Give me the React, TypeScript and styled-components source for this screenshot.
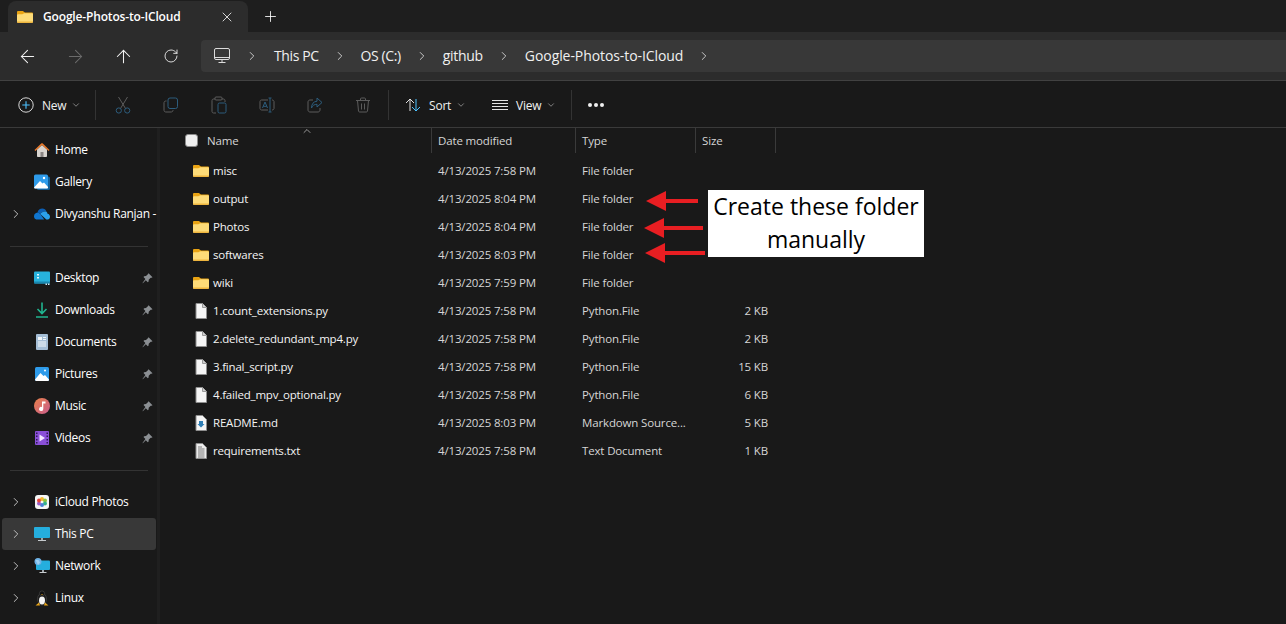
import React from "react";
import styled, { createGlobalStyle } from "styled-components";
import {
  ArrowLeft,
  ArrowRight,
  ArrowUp,
  ChevronDown,
  ChevronRight,
  ChevronUp,
  Plus,
  RotateCw,
  X,
} from "lucide-react";

const Global = createGlobalStyle`
  html, body { margin: 0; padding: 0; background: #191919; }
  body { font-family: "Open Sans", "Noto Sans", sans-serif; color: #fff; overflow: hidden; }
`;

const Page = styled.div`
  position: relative;
  width: 1286px;
  height: 624px;
  overflow: hidden;
  display: flex;
  flex-direction: column;
  background: #191919;
`;

const TabStrip = styled.div`
  height: 32px;
  flex: none;
  display: flex;
  align-items: flex-end;
  padding-left: 8px;
  background: #1e1e1e;
`;

const Tab = styled.div`
  width: 240px;
  height: 31px;
  box-sizing: border-box;
  display: flex;
  align-items: center;
  padding: 0 13px 0 9px;
  background: #2c2c2c;
  border-radius: 8px 8px 0 0;
  font-size: 12px;
  font-weight: 600;
`;

const TabTitle = styled.span`
  flex: 1;
  margin-left: 10px;
  letter-spacing: -0.16px;
`;

const NewTab = styled.div`
  display: flex;
  margin: 0 0 7px 14px;
  color: #fff;
  height: 17px;
`;

const NavBar = styled.div`
  height: 48px;
  flex: none;
  box-sizing: border-box;
  display: flex;
  align-items: center;
  padding-left: 3px;
  background: #2c2c2c;
`;

const NavButton = styled.div<{ $dim?: boolean }>`
  width: 48px;
  display: flex;
  justify-content: center;
  color: ${(p) => (p.$dim ? "#6b6b6b" : "#f2f2f2")};
`;

const Crumbs = styled.div`
  flex: 1;
  height: 32px;
  margin-left: 6px;
  display: flex;
  align-items: center;
  padding-left: 13px;
  background: #383838;
  border-radius: 4px 0 0 4px;
  font-size: 14px;
  color: #f0f0f0;
`;

const Crumb = styled.span<{ $spacing: number }>`
  letter-spacing: ${(p) => p.$spacing}px;
  margin-bottom: 2px;
`;

const CrumbArrow = styled.span`
  display: flex;
  width: 42px;
  justify-content: center;
  color: #e6e6e6;
`;

const FirstArrow = styled(CrumbArrow)`
  width: 44px;
`;

const CommandBar = styled.div`
  height: 48px;
  flex: none;
  box-sizing: border-box;
  display: flex;
  align-items: center;
  border-top: 1px solid #414141;
  border-bottom: 1px solid #3a3a3a;
  background: #191919;
  font-size: 12px;
  color: #f0f0f0;
  padding: 2px 0 0 18px;
`;

const CommandDivider = styled.div<{ $left: number; $right: number }>`
  width: 1px;
  height: 30px;
  background: #333;
  margin: 0 ${(p) => p.$right}px 0 ${(p) => p.$left}px;
`;

const IconSlot = styled.div`
  width: 48px;
  height: 20px;
  display: flex;
  justify-content: center;
  align-items: center;
`;

const LabelIcon = styled.span<{ $left: number }>`
  display: flex;
  margin-left: ${(p) => p.$left}px;
`;

const CommandLabel = styled.div<{ $width: number }>`
  display: flex;
  align-items: center;
  width: ${(p) => p.$width}px;
  margin-left: 8px;
  letter-spacing: -0.2px;
`;

const Caret = styled.span`
  display: flex;
  margin-left: 5px;
  color: #c8c8c8;
`;

const Dots = styled.div`
  display: flex;
  gap: 2px;
  margin-left: 10px;
`;

const Dot = styled.span`
  width: 4px;
  height: 4px;
  border-radius: 50%;
  background: #f0f0f0;
`;

const Body = styled.div`
  flex: 1;
  display: flex;
  min-height: 0;
`;

const Sidebar = styled.nav`
  width: 157px;
  flex: none;
  box-sizing: border-box;
  padding: 6px 0 0 2px;
  font-size: 12px;
`;

const SideRow = styled.div<{ $active?: boolean }>`
  height: 32px;
  width: 154px;
  box-sizing: border-box;
  display: flex;
  align-items: center;
  position: relative;
  padding-left: 32px;
  border-radius: 3px;
  background: ${(p) => (p.$active ? "#383838" : "transparent")};
  white-space: nowrap;
`;

const SideChevron = styled.span`
  position: absolute;
  left: 7px;
  top: 9px;
  display: flex;
  color: #c8c8c8;
`;

const SideIcon = styled.span`
  width: 16px;
  height: 16px;
  display: flex;
  flex: none;
`;

const SideText = styled.span`
  margin: 0 0 2px 5px;
  letter-spacing: -0.32px;
  flex: 1;
`;

const PinSlot = styled.span`
  display: flex;
  margin-right: 3px;
`;

const SideRule = styled.div<{ $before: number; $after: number }>`
  height: 1px;
  width: 138px;
  background: #333;
  margin: ${(p) => p.$before}px 0 ${(p) => p.$after}px 8px;
`;

const Gutter = styled.div`
  width: 3px;
  flex: none;
  background: #1f1f1f;
`;

const Main = styled.main`
  flex: 1;
  position: relative;
  font-size: 11.5px;
`;

const Columns = "272px 144px 120px 80px";

const HeaderRow = styled.div`
  height: 25px;
  display: grid;
  grid-template-columns: ${Columns};
  color: #d6d6d6;
  margin-bottom: 4px;
`;

const HeaderCell = styled.div<{ $pad: number }>`
  display: flex;
  align-items: center;
  padding-left: ${(p) => p.$pad}px;
  border-right: 1px solid #3a3a3a;
  letter-spacing: -0.15px;
`;

const Check = styled.span`
  width: 11px;
  height: 11px;
  margin-right: 9px;
  border-radius: 3px;
  background: #efefef;
  border: 1px solid #8a8a8a;
`;

const SortCaret = styled.span`
  position: absolute;
  left: 141px;
  top: -3px;
  display: flex;
  color: #cfcfcf;
`;

const FileRow = styled.div`
  height: 28px;
  display: grid;
  grid-template-columns: ${Columns};
  align-items: center;
  color: #d6d6d6;
  letter-spacing: -0.15px;
`;

const NameCell = styled.div`
  display: flex;
  align-items: center;
  padding-left: 33px;
  color: #f4f4f4;
`;

const FileName = styled.span`
  margin: 0 0 1px 4px;
  letter-spacing: -0.2px;
`;

const MetaCell = styled.div`
  padding-left: 6px;
  margin-bottom: 1px;
`;

const SizeCell = styled.div`
  text-align: right;
  padding-right: 8px;
  margin-bottom: 1px;
`;

const Callout = styled.div`
  position: absolute;
  left: 708px;
  top: 190px;
  width: 216px;
  height: 67px;
  background: #fff;
  color: #000;
  font-size: 23px;
  line-height: 33px;
  text-align: center;
`;

const ArrowMark = styled.svg<{ $x: number; $y: number }>`
  position: absolute;
  left: ${(p) => p.$x}px;
  top: ${(p) => p.$y}px;
`;

const FolderIcon = () => (
  <svg width="16" height="16" viewBox="0 0 16 16">
    <path d="M0 3.2C0 2.5.5 2 1.2 2h4.3c.4 0 .7.1 1 .4L8 3.6h6.8c.7 0 1.2.5 1.2 1.2V7H0z" fill="#e9a313" />
    <path d="M0 6.2c0-.5.4-.9.9-.9h4.4L7.2 4.2h7.9c.5 0 .9.4.9.9v7.7c0 .7-.5 1.2-1.2 1.2H1.2C.5 14 0 13.5 0 12.8z" fill="#fddb78" />
    <path d="M0 12.4h16v.4c0 .7-.5 1.2-1.2 1.2H1.2C.5 14 0 13.5 0 12.8z" fill="#eeb53e" />
  </svg>
);

const PageIcon = () => (
  <svg width="16" height="16" viewBox="0 0 16 16">
    <path d="M3 .5h6.5l4 4v11H3z" fill="#f5f5f5" stroke="#8e8e8e" />
    <path d="M9.5.5v4h4" fill="#cfcfcf" stroke="#9a9a9a" />
  </svg>
);

const MarkdownIcon = () => (
  <svg width="16" height="16" viewBox="0 0 16 16">
    <path d="M3 .5h6.5l4 4v11H3z" fill="#f5f5f5" stroke="#8e8e8e" />
    <path d="M6 6h4v3h1.500L8 12.500 4.500 9H6z" fill="#2f7fb6" />
  </svg>
);

const TextIcon = () => (
  <svg width="16" height="16" viewBox="0 0 16 16">
    <path d="M3 .5h6.5l4 4v11H3z" fill="#ececec" stroke="#8e8e8e" />
    <path d="M5 4h4M5 6h6.5M5 8h6.5M5 10h6.5M5 12h6.5M5 14h6.5" stroke="#7c7c7c" />
  </svg>
);

const MonitorGlyph = () => (
  <svg width="16" height="16" viewBox="0 0 16 16" fill="none" stroke="#dcdcdc" strokeWidth="1">
    <rect x="0.5" y="0.5" width="15" height="11" rx="1.5" />
    <path d="M.5 9.500h15M8 11.500v3M4.500 14.500h7" />
  </svg>
);

const NewIcon = () => (
  <svg width="16" height="16" viewBox="0 0 16 16" fill="none">
    <circle cx="8" cy="8" r="7.2" stroke="#d8d8d8" />
    <path d="M8 4.300v7.400M4.300 8h7.400" stroke="#4cc2ff" strokeWidth="1.1" />
  </svg>
);

const CutIcon = () => (
  <svg width="16" height="18" viewBox="0 0 16 18" fill="none">
    <path d="M3.500 1l7 11.500M12.500 1l-7 11.500" stroke="#5c5c5c" />
    <circle cx="3.800" cy="14.500" r="2.600" stroke="#2d5d7d" />
    <circle cx="12.200" cy="14.500" r="2.600" stroke="#2d5d7d" />
  </svg>
);

const CopyIcon = () => (
  <svg width="16" height="16" viewBox="0 0 16 16" fill="none">
    <path d="M3.500 4h-.7C1.800 4 1 4.800 1 5.800v7.400C1 14.200 1.800 15 2.800 15h5.400c1 0 1.800-.8 1.800-1.800V13" stroke="#5c5c5c" />
    <rect x="5" y="1" width="9.500" height="10.500" rx="2" stroke="#2d5d7d" />
  </svg>
);

const PasteIcon = () => (
  <svg width="16" height="18" viewBox="0 0 16 18" fill="none">
    <path d="M4 3H2.500C1.700 3 1 3.700 1 4.500v11C1 16.300 1.700 17 2.500 17H5M11 3h1.500c.8 0 1.500.7 1.500 1.500V6" stroke="#5c5c5c" />
    <rect x="4" y="1" width="7" height="3" rx="1" stroke="#5c5c5c" />
    <rect x="7" y="7" width="8" height="10" rx="1.500" stroke="#2d5d7d" />
  </svg>
);

const RenameIcon = () => (
  <svg width="16" height="16" viewBox="0 0 16 16" fill="none">
    <path d="M9 3H2.500C1.700 3 1 3.700 1 4.500v7C1 12.300 1.700 13 2.500 13H9M13 3c1.100 0 2 .7 2 1.500v7c0 .8-.9 1.500-2 1.500" stroke="#5c5c5c" />
    <path d="M11 1v14M9.500 1h3M9.500 15h3M3.500 11L6 5l2.500 6M4.300 9.300h3.400" stroke="#2d5d7d" />
  </svg>
);

const ShareIcon = () => (
  <svg width="16" height="16" viewBox="0 0 16 16" fill="none">
    <path d="M6 3H3C1.900 3 1 3.900 1 5v8c0 1.100.9 2 2 2h8c1.100 0 2-.9 2-2v-2" stroke="#5c5c5c" />
    <path d="M10 1l5 4.500L10 10V7.300C7.500 7.300 5.500 8.300 4.500 11c0-4 2-6.500 5.500-6.800z" stroke="#2d5d7d" strokeLinejoin="round" />
  </svg>
);

const TrashIcon = () => (
  <svg width="16" height="16" viewBox="0 0 16 16" fill="none" stroke="#5c5c5c">
    <path d="M1 3.500h14M5.500 3.500V2c0-.6.4-1 1-1h3c.6 0 1 .4 1 1v1.500M2.500 3.500l1 10.500c.1.600.5 1 1.100 1h6.800c.6 0 1-.4 1.100-1l1-10.500M6.500 6.500v6M9.500 6.500v6" />
  </svg>
);

const SortIcon = () => (
  <svg width="16" height="16" viewBox="0 0 16 16" fill="none">
    <path d="M5 14V2M1 6l4-4 4 4" stroke="#e4e4e4" />
    <path d="M11 2v12M7 10l4 4 4-4" stroke="#4cc2ff" />
  </svg>
);

const ViewIcon = () => (
  <svg width="16" height="12" viewBox="0 0 16 12" stroke="#e4e4e4">
    <path d="M0 1.500h16M0 4.500h16M0 7.500h16M0 10.500h16" />
  </svg>
);

const PinIcon = () => (
  <svg width="11" height="11" viewBox="0 0 11 11">
    <path d="M6.800.5l3.700 3.700-1 .6-.8-.1-2 2.100-.1 1.800-.8.7-2-2L.8 10.200l-.3-.3L3.400 6 1.500 4l.7-.8L4 3.100l2.100-2-.1-.7z" fill="#8b8f93" />
  </svg>
);

const HomeIcon = () => (
  <svg width="16" height="16" viewBox="0 0 16 16">
    <path d="M3 7.500L8 3l5 4.500V14c0 .5-.4 1-1 1H4c-.6 0-1-.5-1-1z" fill="#d8d4cf" />
    <path d="M6.500 10h3v5h-3z" fill="#8a8583" />
    <path d="M.5 8L7.200 1.500c.5-.4 1.100-.4 1.600 0L15.500 8l-.9.900L8 3 1.400 8.900z" fill="#e8792b" />
  </svg>
);

const GalleryIcon = () => (
  <svg width="16" height="16" viewBox="0 0 16 16">
    <rect x="3" y="2.500" width="13" height="13.500" rx="1.500" fill="#135f99" />
    <rect x="0" y="0.500" width="14" height="14" rx="1.500" fill="#2e9bea" />
    <path d="M0 13.500L6 7l2.500 2.500 1.500-1 4 4.500v.5c0 .6-.5 1-1 1H1.500c-.8 0-1.500-.5-1.500-1.500z" fill="#fff" />
    <circle cx="10" cy="4" r="1.200" fill="#fff" />
  </svg>
);

const CloudIcon = () => (
  <svg width="16" height="16" viewBox="0 0 16 16">
    <path d="M3.500 6.500C4 4 6 2.500 8.300 2.500c2 0 3.500 1 4.200 3.200C10 5 7.500 6 6.300 8 5.500 7.300 4.500 6.700 3.500 6.500z" fill="#0c5fb5" />
    <path d="M3.500 6.500C1.500 6.700 0 8.300 0 10.200 0 12 1 13 2.200 13.500h8L6.300 8C5.500 7.200 4.500 6.700 3.500 6.500z" fill="#1076d0" />
    <path d="M12.500 5.700C10 5 7.500 6 6.300 8l6 5.500h1.500c1.200-.2 2.200-1.300 2.200-2.800 0-1.500-1-2.800-2.500-3-.1-.7-.3-1.400-1-2z" fill="#2ba0ec" />
  </svg>
);

const DesktopIcon = () => (
  <svg width="16" height="16" viewBox="0 0 16 16">
    <rect x="0" y="1.500" width="16" height="12" rx="1" fill="#27b2dc" />
    <path d="M0 11.500h16v1c0 .6-.4 1-1 1H1c-.6 0-1-.4-1-1z" fill="#1a86ad" />
    <path d="M3 4h2v1.500H3zM3 7h2v1.500H3z" fill="#e5f8ff" />
    <path d="M11.500 13.500H13V15h-1.500zM14 13.500h1.500V15H14z" fill="#cfeaf5" />
  </svg>
);

const DownloadIcon = () => (
  <svg width="16" height="16" viewBox="0 0 16 16" fill="none" stroke="#20b48f" strokeWidth="1.600">
    <path d="M8 .5V11M3.500 7L8 11.500 12.500 7M2 15h12" />
  </svg>
);

const DocumentsIcon = () => (
  <svg width="16" height="16" viewBox="0 0 16 16">
    <rect x="2" y="0" width="12" height="16" rx="1" fill="#a5bed6" />
    <rect x="4" y="3" width="4" height="3" fill="#f4f8fb" />
    <path d="M9 3.500h3M9 5.500h3M4 8h8M4 10h8M4 12h8" stroke="#f4f8fb" />
  </svg>
);

const PicturesIcon = () => (
  <svg width="16" height="16" viewBox="0 0 16 16">
    <rect x="1" y="1" width="14" height="14" rx="1.500" fill="#2e9bea" />
    <path d="M1 13.500L6.500 7l3 3 1.500-1 4 4.500v.2c0 .7-.6 1.300-1.300 1.300H2.500C1.700 15 1 14.300 1 13.500z" fill="#fff" />
    <circle cx="11" cy="4.500" r="1" fill="#fff" />
  </svg>
);

const MusicIcon = () => (
  <svg width="16" height="16" viewBox="0 0 16 16">
    <defs>
      <linearGradient id="musicFill" x1="0" y1="0" x2="1" y2="1">
        <stop offset="0" stopColor="#ea8149" />
        <stop offset="1" stopColor="#c85c8e" />
      </linearGradient>
    </defs>
    <circle cx="8" cy="8" r="8" fill="url(#musicFill)" />
    <path d="M8 3.500h3.500v2H9.300v5.300A2.100 2.100 0 1 1 8 9z" fill="#fff" />
  </svg>
);

const VideosIcon = () => (
  <svg width="16" height="16" viewBox="0 0 16 16">
    <rect x="1" y="1" width="14" height="14" rx="1" fill="#8a4fd8" />
    <path d="M2 2.500h1.500V4H2zM2 5.500h1.500V7H2zM2 9h1.500v1.500H2zM2 12h1.500v1.500H2zM12.500 2.500H14V4h-1.500zM12.500 5.500H14V7h-1.500zM12.500 9H14v1.500h-1.500zM12.500 12H14v1.500h-1.500z" fill="#2d1a52" />
    <path d="M5.500 4.500L11 8l-5.500 3.500z" fill="#f2e6ff" />
  </svg>
);

const ICloudIcon = () => (
  <svg width="16" height="16" viewBox="0 0 16 16">
    <rect x="1" y="1" width="14" height="14" rx="3" fill="#f6f6f6" />
    <circle cx="8" cy="5" r="2" fill="#f2b630" />
    <circle cx="11" cy="6.500" r="2" fill="#8fc43c" />
    <circle cx="11" cy="9.500" r="2" fill="#37b28a" />
    <circle cx="8" cy="11" r="2" fill="#4a82d6" />
    <circle cx="5" cy="9.500" r="2" fill="#9a5fc8" />
    <circle cx="5" cy="6.500" r="2" fill="#e8463c" />
  </svg>
);

const ThisPCIcon = () => (
  <svg width="16" height="16" viewBox="0 0 16 16">
    <rect x="0" y="1" width="16" height="11" rx="1" fill="#25aede" />
    <path d="M7 12h2v2H7z" fill="#9fa6ab" />
    <path d="M4 14h8v1H4z" fill="#c5cacd" />
  </svg>
);

const NetworkIcon = () => (
  <svg width="16" height="16" viewBox="0 0 16 16">
    <rect x="2" y="2.500" width="14" height="9.500" rx="1" fill="#25aede" />
    <path d="M8 12h2v2H8z" fill="#9fa6ab" />
    <path d="M5.500 14h7v1h-7z" fill="#c5cacd" />
    <circle cx="4" cy="3.500" r="3.500" fill="#6fb3e8" />
    <path d="M1.500 2h3L6 4.500 4 7z" fill="#9dd0f2" />
  </svg>
);

const LinuxIcon = () => (
  <svg width="16" height="16" viewBox="0 0 16 16">
    <ellipse cx="8" cy="9" rx="4.500" ry="6" fill="#1a1a1a" stroke="#555" strokeWidth="0.500" />
    <ellipse cx="8" cy="10.500" rx="3" ry="4" fill="#f4f4f4" />
    <circle cx="8" cy="3.500" r="2.600" fill="#111" stroke="#555" strokeWidth="0.500" />
    <path d="M7 4h2L8 5z" fill="#e8a418" />
    <path d="M1.500 15.500L5 12.500l1 3zM14.500 15.500L11 12.500l-1 3z" fill="#e8a418" />
  </svg>
);

const quickAccess: [string, React.ReactElement][] = [
  ["Desktop", <DesktopIcon />],
  ["Downloads", <DownloadIcon />],
  ["Documents", <DocumentsIcon />],
  ["Pictures", <PicturesIcon />],
  ["Music", <MusicIcon />],
  ["Videos", <VideosIcon />],
];

const places: [string, React.ReactElement][] = [
  ["iCloud Photos", <ICloudIcon />],
  ["This PC", <ThisPCIcon />],
  ["Network", <NetworkIcon />],
  ["Linux", <LinuxIcon />],
];

const files = [
  { name: "misc", date: "4/13/2025 7:58 PM", type: "File folder", size: "", icon: <FolderIcon /> },
  { name: "output", date: "4/13/2025 8:04 PM", type: "File folder", size: "", icon: <FolderIcon /> },
  { name: "Photos", date: "4/13/2025 8:04 PM", type: "File folder", size: "", icon: <FolderIcon /> },
  { name: "softwares", date: "4/13/2025 8:03 PM", type: "File folder", size: "", icon: <FolderIcon /> },
  { name: "wiki", date: "4/13/2025 7:59 PM", type: "File folder", size: "", icon: <FolderIcon /> },
  { name: "1.count_extensions.py", date: "4/13/2025 7:58 PM", type: "Python.File", size: "2 KB", icon: <PageIcon /> },
  { name: "2.delete_redundant_mp4.py", date: "4/13/2025 7:58 PM", type: "Python.File", size: "2 KB", icon: <PageIcon /> },
  { name: "3.final_script.py", date: "4/13/2025 7:58 PM", type: "Python.File", size: "15 KB", icon: <PageIcon /> },
  { name: "4.failed_mpv_optional.py", date: "4/13/2025 7:58 PM", type: "Python.File", size: "6 KB", icon: <PageIcon /> },
  { name: "README.md", date: "4/13/2025 8:03 PM", type: "Markdown Source...", size: "5 KB", icon: <MarkdownIcon /> },
  { name: "requirements.txt", date: "4/13/2025 7:58 PM", type: "Text Document", size: "1 KB", icon: <TextIcon /> },
];

const arrows = [
  { x: 646, y: 191, tail: 32 },
  { x: 644, y: 218, tail: 39 },
  { x: 645, y: 243, tail: 40 },
];

const crumbs: [string, number][] = [
  ["This PC", -0.4],
  ["OS (C:)", -0.4],
  ["github", -0.3],
  ["Google-Photos-to-ICloud", -0.08],
];

function SideEntry(props: {
  label: string;
  icon: React.ReactElement;
  expandable?: boolean;
  pinned?: boolean;
  active?: boolean;
}): React.ReactElement {
  return (
    <SideRow $active={props.active}>
      {props.expandable && (
        <SideChevron>
          <ChevronRight size={14} strokeWidth={1.6} />
        </SideChevron>
      )}
      <SideIcon>{props.icon}</SideIcon>
      <SideText>{props.label}</SideText>
      {props.pinned && (
        <PinSlot>
          <PinIcon />
        </PinSlot>
      )}
    </SideRow>
  );
}

function MenuLabel(props: { text: string; width: number }): React.ReactElement {
  return (
    <CommandLabel $width={props.width}>
      {props.text}
      <Caret>
        <ChevronDown size={10} strokeWidth={1.4} />
      </Caret>
    </CommandLabel>
  );
}

function App(): React.ReactElement {
  return (
    <Page>
      <Global />
      <TabStrip>
        <Tab>
          <FolderIcon />
          <TabTitle>Google-Photos-to-ICloud</TabTitle>
          <X size={16} strokeWidth={1.2} />
        </Tab>
        <NewTab>
          <Plus size={17} strokeWidth={1.2} />
        </NewTab>
      </TabStrip>
      <NavBar>
        <NavButton>
          <ArrowLeft size={21} strokeWidth={1.2} />
        </NavButton>
        <NavButton $dim>
          <ArrowRight size={21} strokeWidth={1.2} />
        </NavButton>
        <NavButton>
          <ArrowUp size={21} strokeWidth={1.2} />
        </NavButton>
        <NavButton>
          <RotateCw size={16} strokeWidth={1.3} />
        </NavButton>
        <Crumbs>
          <MonitorGlyph />
          <FirstArrow>
            <ChevronRight size={14} strokeWidth={1.4} />
          </FirstArrow>
          {crumbs.map(([label, spacing]) => (
            <React.Fragment key={label}>
              <Crumb $spacing={spacing}>{label}</Crumb>
              <CrumbArrow>
                <ChevronRight size={14} strokeWidth={1.4} />
              </CrumbArrow>
            </React.Fragment>
          ))}
        </Crumbs>
      </NavBar>
      <CommandBar>
        <NewIcon />
        <MenuLabel text="New" width={51} />
        <CommandDivider $left={2} $right={3} />
        <IconSlot>
          <CutIcon />
        </IconSlot>
        <IconSlot>
          <CopyIcon />
        </IconSlot>
        <IconSlot>
          <PasteIcon />
        </IconSlot>
        <IconSlot>
          <RenameIcon />
        </IconSlot>
        <IconSlot>
          <ShareIcon />
        </IconSlot>
        <IconSlot>
          <TrashIcon />
        </IconSlot>
        <CommandDivider $left={1} $right={2} />
        <LabelIcon $left={14}>
          <SortIcon />
        </LabelIcon>
        <MenuLabel text="Sort" width={39} />
        <LabelIcon $left={24}>
          <ViewIcon />
        </LabelIcon>
        <MenuLabel text="View" width={50} />
        <CommandDivider $left={5} $right={6} />
        <Dots>
          <Dot />
          <Dot />
          <Dot />
        </Dots>
      </CommandBar>
      <Body>
        <Sidebar>
          <SideEntry label="Home" icon={<HomeIcon />} />
          <SideEntry label="Gallery" icon={<GalleryIcon />} />
          <SideEntry label="Divyanshu Ranjan -" icon={<CloudIcon />} expandable />
          <SideRule $before={16} $after={15} />
          {quickAccess.map(([label, icon]) => (
            <SideEntry key={label} label={label} icon={icon} pinned />
          ))}
          <SideRule $before={16} $after={15} />
          {places.map(([label, icon]) => (
            <SideEntry key={label} label={label} icon={icon} expandable active={label === "This PC"} />
          ))}
        </Sidebar>
        <Gutter />
        <Main>
          <HeaderRow>
            <HeaderCell $pad={25}>
              <Check />
              Name
              <SortCaret>
                <ChevronUp size={12} strokeWidth={1.4} />
              </SortCaret>
            </HeaderCell>
            <HeaderCell $pad={6}>Date modified</HeaderCell>
            <HeaderCell $pad={6}>Type</HeaderCell>
            <HeaderCell $pad={6}>Size</HeaderCell>
          </HeaderRow>
          {files.map((file) => (
            <FileRow key={file.name}>
              <NameCell>
                {file.icon}
                <FileName>{file.name}</FileName>
              </NameCell>
              <MetaCell>{file.date}</MetaCell>
              <MetaCell>{file.type}</MetaCell>
              <SizeCell>{file.size}</SizeCell>
            </FileRow>
          ))}
        </Main>
      </Body>
      {arrows.map((a) => (
        <ArrowMark key={a.y} $x={a.x} $y={a.y} width={a.tail + 20} height="20" viewBox={`0 0 ${a.tail + 20} 20`}>
          <path d={`M0 10L20 0v8h${a.tail}v4H20v8z`} fill="#e81e22" />
        </ArrowMark>
      ))}
      <Callout>
        Create these folder
        <br />
        manually
      </Callout>
    </Page>
  );
}

export default App;
